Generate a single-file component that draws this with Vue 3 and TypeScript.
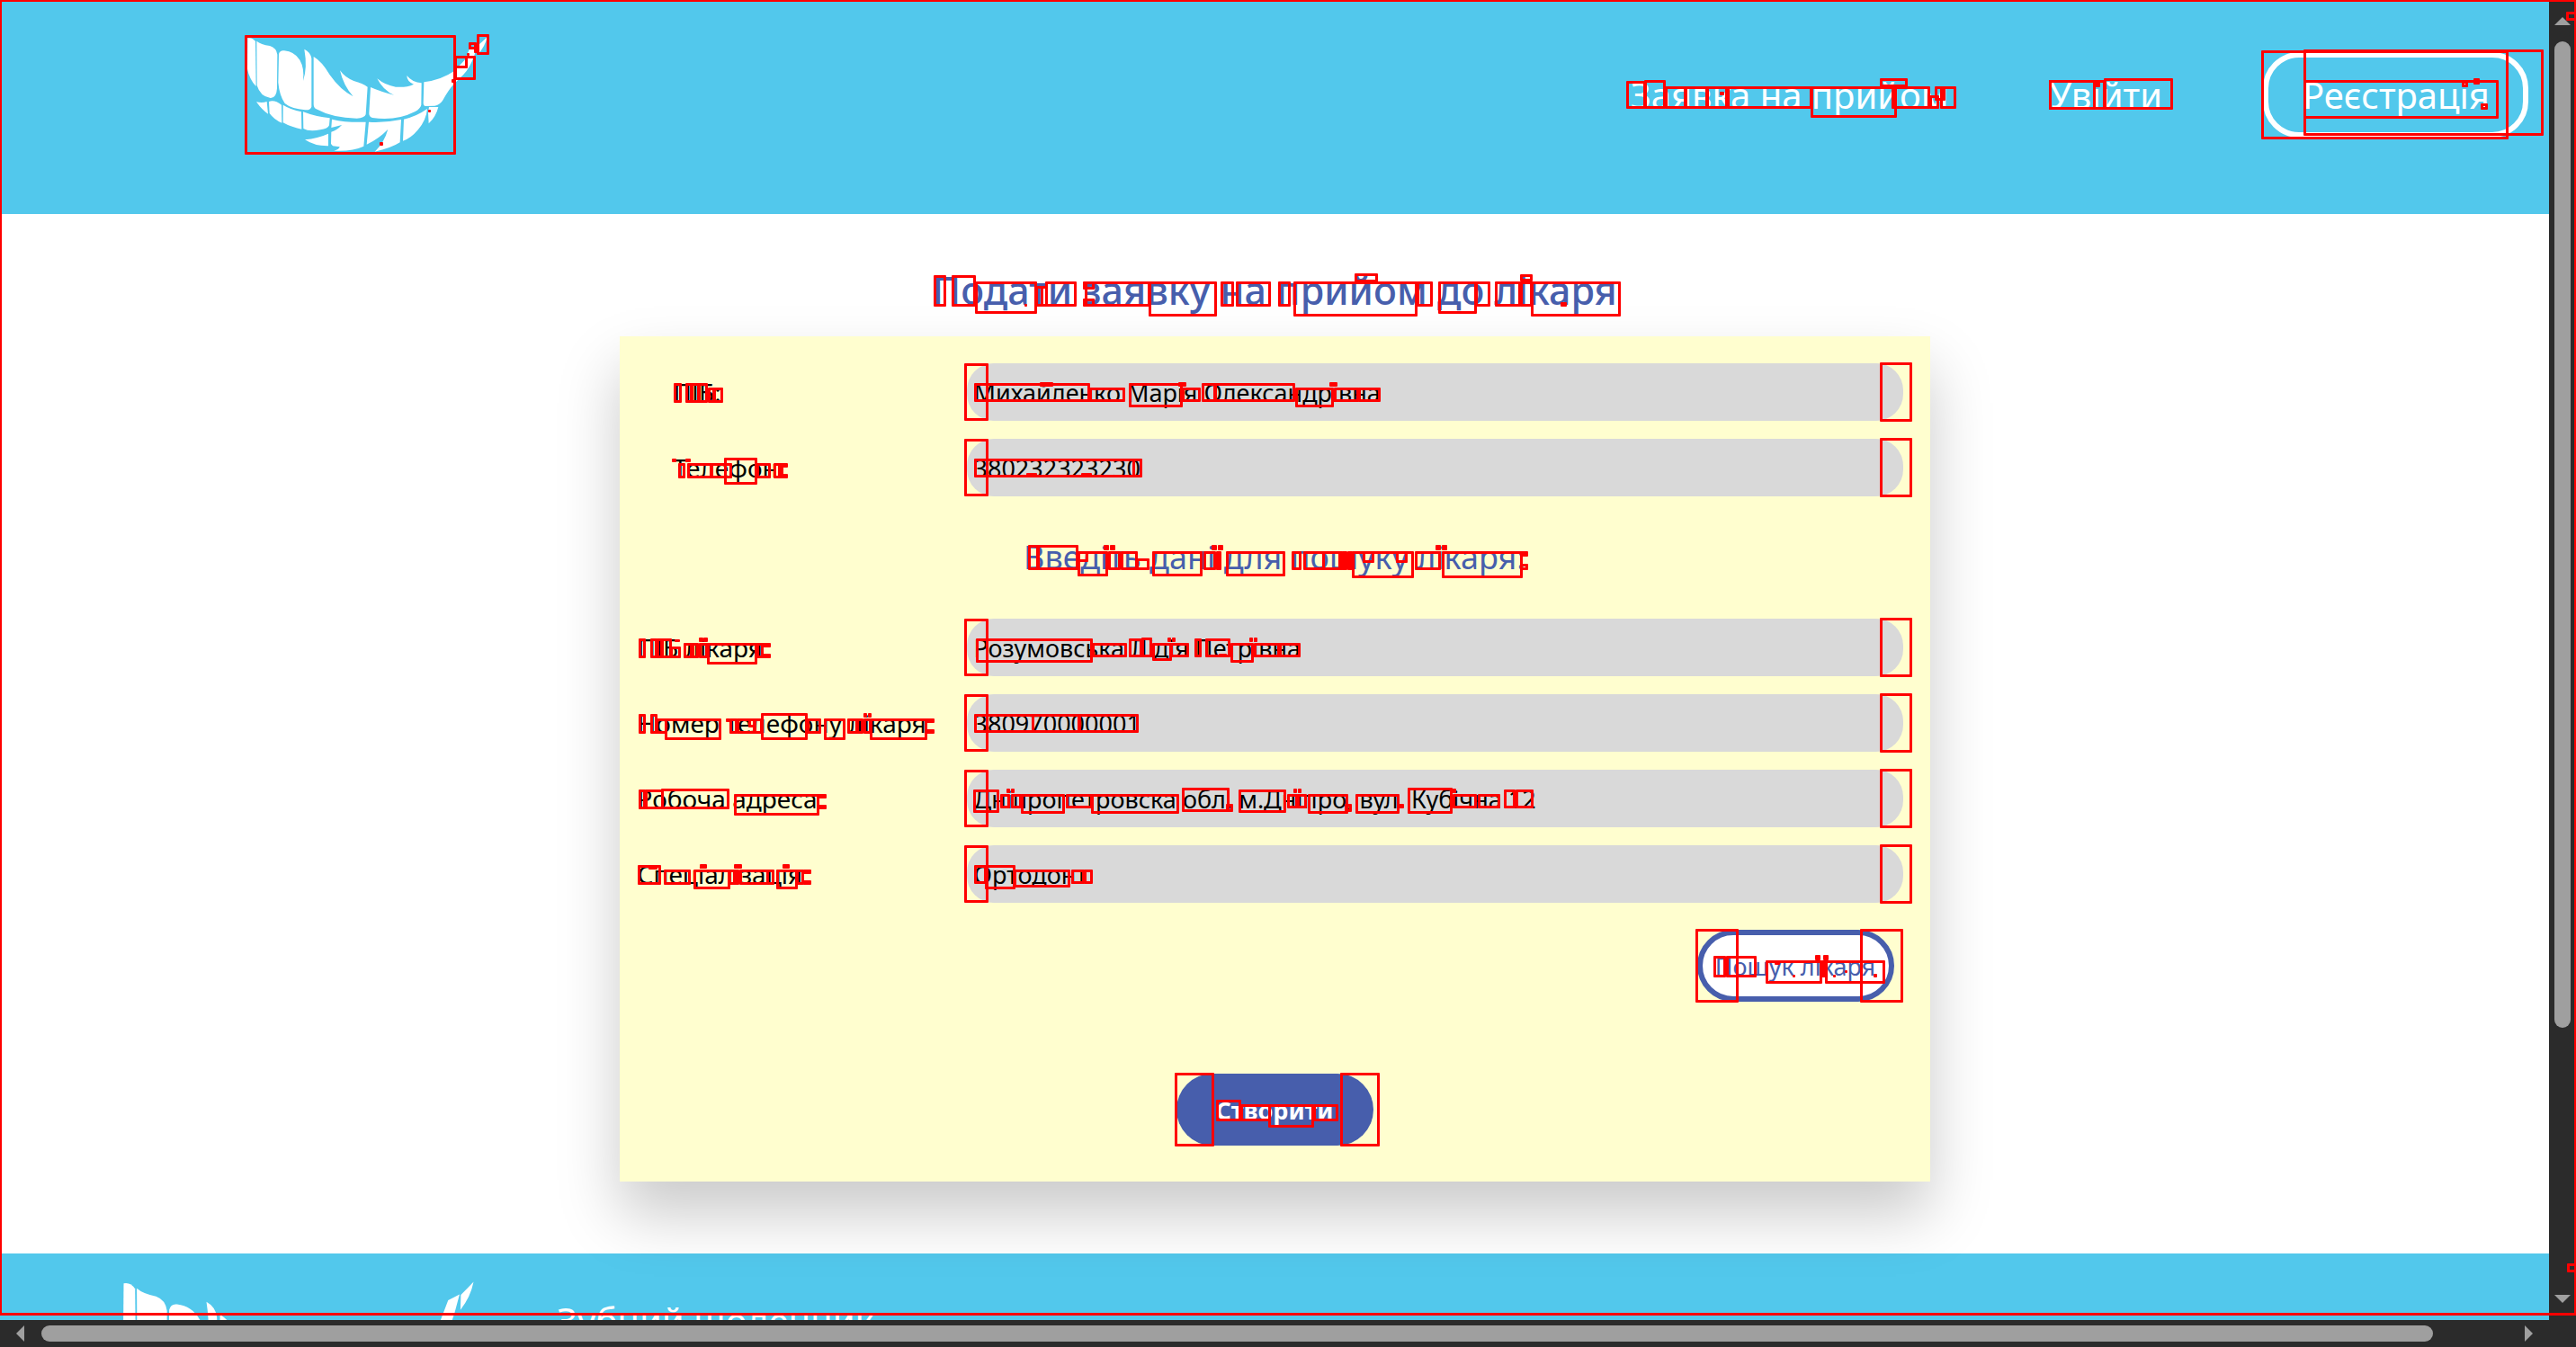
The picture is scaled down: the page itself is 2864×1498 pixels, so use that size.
<script setup lang="ts">
import { reactive } from 'vue'

interface Field {
  id: string
  label: string
  value: string
}

const patient = reactive<Field[]>([
  { id: 'patient-name', label: 'ПІБ:', value: 'Михайленко Марія Олександрівна' },
  { id: 'patient-phone', label: 'Телефон:', value: '380232323230' },
])

const doctor = reactive<Field[]>([
  { id: 'doctor-name', label: 'ПІБ лікаря:', value: 'Розумовська Лідія Петрівна' },
  { id: 'doctor-phone', label: 'Номер телефону лікаря:', value: '380970000001' },
  { id: 'doctor-address', label: 'Робоча адреса:', value: 'Дніпропетровска обл, м.Дніпро, вул. Кубічна 12' },
  { id: 'doctor-field', label: 'Спеціалізація:', value: 'Ортодонт' },
])

const teeth: string[] = [
  'M76 67Q92 64 102 78L104 228Q82 205 75 170Z',
  'M106 77Q120 88 150 93Q172 100 175 122L174 235Q172 268 152 267Q118 262 107 225Z',
  'M180 120Q184 107 198 109Q232 112 250 140Q266 168 261 210Q276 165 265 104Q286 114 289 135L289 296Q286 308 268 307Q222 303 200 285Q182 258 178 215Z',
  'M296 129Q324 145 350 190Q385 240 428 262Q395 225 384 175Q400 198 430 210Q460 218 476 230L470 322Q466 334 440 335Q360 334 305 304Q296 300 296 288Z',
  'M486 231Q520 246 564 257Q528 242 508 202Q535 225 570 230Q605 233 630 221Q607 212 607 192Q625 215 656 217L655 290Q652 302 635 312Q570 345 492 333Q481 330 481 318Z',
  'M664 214Q725 205 766 176L800 140L817 101L843 89L832 125Q818 165 795 190L766 218Q745 240 726 276Q716 290 700 293L668 294Q662 293 662 285Z',
  'M875 64Q868 95 845 120L846 90Q860 78 875 64Z',
  'M105 280Q125 285 140 279L144 320Q125 308 105 280Z',
  'M147 279Q166 272 189 290L190 350Q165 340 149 318Z',
  'M194 290Q220 306 255 313L256 371Q220 364 194 349Z',
  'M261 313Q305 330 350 334L348 358Q344 370 318 373Q280 380 262 369Z',
  'M267 406Q310 402 345 386L345 427Q300 428 267 406Z',
  'M357 338Q410 350 470 347L463 428Q425 446 364 443Q382 438 383 430L360 427L354 420L355 380Q375 374 390 357L355 366Z',
  'M480 347Q535 350 588 339L584 415Q555 434 500 446Q532 415 544 371Q515 402 473 422Z',
  'M597 338Q640 328 675 303Q672 340 645 372Q620 402 594 410Z',
  'M681 297L712 297Q704 330 680 352L678 315Z',
]

// Outlined regions: left, top, right, bottom
type Region = [number, number, number, number]

const regions: Region[] = [
  [-1, -1, 2865, 1463], [2853, 13, 2865, 23], [2854, 1405, 2865, 1415],
  // logo
  [272, 39, 507, 172], [530, 38, 544, 61], [521, 47, 530, 55], [527, 51, 533, 59],
  [519, 59, 522, 62], [505, 62, 529, 89], [505, 62, 520, 76], [502, 88, 506, 92],
  [476, 122, 479, 125], [422, 158, 426, 162],
  // navigation
  [1808, 90, 1830, 121], [1828, 89, 1852, 121], [1851, 96, 1875, 121], [1873, 96, 1899, 121],
  [1897, 96, 1921, 121], [1912, 102, 1917, 106], [1920, 96, 2015, 121], [2013, 96, 2109, 131],
  [2090, 87, 2121, 97], [2103, 96, 2146, 121], [2145, 106, 2156, 121], [2151, 96, 2163, 112],
  [2157, 96, 2175, 121], [2278, 89, 2330, 122], [2278, 89, 2341, 122], [2339, 87, 2416, 122],
  [2329, 91, 2335, 97], [2514, 56, 2789, 155], [2561, 55, 2828, 151], [2561, 89, 2778, 132],
  [2737, 90, 2744, 97], [2750, 87, 2757, 94], [2758, 115, 2766, 122],
  // page title
  [1038, 306, 1052, 341], [1058, 306, 1085, 341], [1084, 313, 1153, 349], [1151, 318, 1160, 341],
  [1157, 318, 1165, 341], [1162, 313, 1197, 341], [1204, 313, 1217, 322], [1204, 332, 1217, 341],
  [1206, 313, 1279, 341], [1277, 313, 1353, 352], [1357, 313, 1372, 341], [1374, 313, 1413, 341],
  [1421, 313, 1435, 341], [1438, 313, 1576, 352], [1506, 304, 1532, 314], [1575, 313, 1593, 341],
  [1599, 313, 1642, 349], [1640, 313, 1657, 341], [1662, 313, 1691, 341], [1690, 305, 1704, 313],
  [1690, 313, 1704, 341], [1702, 313, 1802, 352], [1139, 338, 1142, 341], [1735, 336, 1742, 341],
  // field ends
  [1072, 404, 1099, 468], [1072, 488, 1099, 552], [1072, 688, 1099, 752],
  [1072, 772, 1099, 836], [1072, 856, 1099, 920], [1072, 940, 1099, 1004],
  [2090, 403, 2126, 469], [2090, 487, 2126, 553], [2090, 687, 2126, 753],
  [2090, 771, 2126, 837], [2090, 855, 2126, 921], [2090, 939, 2126, 1005],
  // patient name
  [749, 426, 758, 448], [762, 426, 770, 448], [768, 426, 778, 448], [776, 426, 787, 448],
  [787, 431, 795, 448], [793, 431, 804, 448], [1083, 426, 1212, 447], [1156, 425, 1171, 430],
  [1211, 431, 1251, 447], [1255, 426, 1315, 453], [1310, 425, 1319, 430], [1314, 431, 1335, 447],
  [1336, 426, 1352, 447], [1350, 426, 1440, 447], [1440, 431, 1483, 453], [1478, 425, 1487, 430],
  [1483, 431, 1511, 447], [1510, 431, 1535, 447],
  // patient phone
  [747, 510, 752, 514], [762, 510, 768, 514], [754, 515, 762, 532], [764, 515, 792, 532],
  [790, 515, 814, 532], [805, 509, 842, 539], [841, 515, 857, 532], [860, 515, 868, 532],
  [866, 515, 876, 520], [866, 527, 876, 532], [866, 515, 871, 532], [1083, 510, 1262, 531],
  [1259, 510, 1270, 531], [1141, 526, 1153, 531], [1202, 526, 1214, 531],
  // search heading
  [1143, 606, 1155, 634], [1153, 606, 1199, 634], [1198, 613, 1210, 625], [1198, 613, 1232, 641],
  [1227, 606, 1233, 612], [1234, 606, 1240, 612], [1232, 613, 1246, 634], [1246, 613, 1265, 634],
  [1263, 621, 1278, 634], [1281, 613, 1337, 641], [1347, 606, 1353, 612], [1354, 606, 1360, 612],
  [1338, 613, 1352, 634], [1352, 613, 1358, 634], [1363, 613, 1429, 641], [1436, 613, 1447, 634],
  [1449, 613, 1473, 634], [1470, 613, 1491, 634], [1488, 613, 1493, 634], [1492, 613, 1498, 634],
  [1498, 613, 1504, 634], [1503, 613, 1572, 643], [1515, 613, 1528, 626], [1552, 613, 1565, 626],
  [1573, 613, 1602, 634], [1596, 606, 1602, 612], [1603, 606, 1609, 612], [1603, 613, 1693, 643],
  [1690, 613, 1699, 619], [1690, 627, 1699, 634],
  // doctor name
  [710, 710, 718, 732], [723, 710, 731, 732], [730, 710, 737, 732], [735, 710, 747, 732],
  [745, 719, 757, 732], [750, 711, 756, 714], [760, 715, 770, 732], [769, 715, 777, 732],
  [777, 715, 787, 732], [777, 709, 782, 714], [782, 709, 787, 714], [786, 715, 842, 739],
  [841, 715, 849, 732], [847, 715, 857, 720], [847, 727, 857, 732],
  [1085, 710, 1215, 737], [1214, 715, 1253, 731], [1255, 710, 1270, 731], [1269, 709, 1281, 731],
  [1281, 715, 1303, 735], [1298, 709, 1302, 714], [1303, 709, 1307, 714], [1301, 715, 1322, 731],
  [1328, 710, 1336, 731], [1340, 710, 1368, 731], [1355, 727, 1364, 731], [1368, 715, 1394, 737],
  [1389, 709, 1393, 714], [1394, 709, 1398, 714], [1394, 715, 1423, 731], [1422, 715, 1446, 731],
  // doctor phone
  [710, 794, 718, 816], [723, 794, 731, 816], [729, 799, 742, 816], [739, 799, 802, 823],
  [807, 799, 812, 803], [811, 799, 820, 816], [819, 799, 840, 816], [832, 799, 840, 809],
  [838, 799, 848, 816], [846, 793, 898, 823], [897, 799, 913, 816], [916, 799, 940, 823],
  [942, 799, 954, 816], [952, 799, 960, 816], [960, 799, 969, 816], [960, 793, 964, 798],
  [965, 793, 969, 798], [967, 799, 1031, 823], [1028, 799, 1039, 804], [1028, 811, 1039, 816],
  [1083, 794, 1150, 815], [1147, 794, 1201, 815], [1199, 794, 1266, 815],
  // doctor address
  [710, 878, 718, 900], [717, 878, 738, 900], [735, 877, 811, 900], [816, 883, 911, 907],
  [909, 883, 919, 888], [909, 895, 919, 900],
  [1082, 878, 1111, 904], [1112, 883, 1123, 899], [1119, 877, 1123, 882], [1124, 877, 1128, 882],
  [1124, 883, 1136, 899], [1135, 883, 1184, 905], [1185, 883, 1215, 899], [1213, 883, 1311, 905],
  [1314, 876, 1367, 903], [1363, 894, 1371, 903], [1377, 878, 1430, 904], [1431, 883, 1443, 899],
  [1442, 883, 1453, 899], [1438, 877, 1442, 882], [1443, 877, 1447, 882], [1454, 883, 1499, 905],
  [1495, 894, 1503, 903], [1507, 883, 1556, 905], [1554, 894, 1561, 899], [1565, 876, 1615, 905],
  [1612, 877, 1619, 882], [1615, 883, 1642, 899], [1643, 883, 1668, 899], [1672, 878, 1685, 899],
  [1685, 878, 1705, 899],
  // doctor field
  [709, 962, 735, 984], [721, 962, 731, 967], [738, 967, 768, 984], [771, 967, 812, 989],
  [778, 961, 786, 966], [816, 961, 825, 966], [870, 961, 878, 966], [810, 967, 818, 984],
  [816, 967, 822, 984], [822, 967, 855, 984], [852, 967, 861, 984], [863, 967, 887, 989],
  [885, 967, 894, 984], [893, 967, 902, 972], [893, 979, 902, 984],
  [1083, 962, 1097, 983], [1095, 962, 1129, 989], [1127, 967, 1190, 987], [1191, 967, 1206, 983],
  [1205, 967, 1215, 983],
  // search button
  [1885, 1033, 1933, 1115], [2068, 1033, 2116, 1115], [1905, 1063, 1919, 1087], [1919, 1063, 1953, 1087],
  [1963, 1068, 2026, 1094], [2018, 1062, 2024, 1068], [2027, 1062, 2033, 1068], [2025, 1068, 2031, 1087],
  [2029, 1068, 2096, 1094], [1973, 1069, 1979, 1073], [1993, 1084, 1996, 1087], [2083, 1083, 2087, 1087],
  [2038, 1084, 2041, 1087], [2051, 1079, 2054, 1082],
  // create button
  [1306, 1193, 1350, 1275], [1490, 1193, 1534, 1275], [1352, 1223, 1380, 1247], [1379, 1228, 1413, 1247],
  [1410, 1228, 1461, 1254], [1460, 1228, 1488, 1247],
]

const place = ([left, top, right, bottom]: Region) => ({
  left: `${left}px`,
  top: `${top}px`,
  width: `${right - left}px`,
  height: `${bottom - top}px`,
})
</script>

<template>
  <div class="window">
    <div class="page">
      <header class="header">
        <a href="#" class="logo" aria-label="Зубний щоденник">
          <svg viewBox="75 63 801 387" preserveAspectRatio="none" aria-hidden="true">
            <path v-for="d in teeth" :key="d" :d="d" />
          </svg>
        </a>
        <nav class="nav">
          <a href="#">Заявка на прийом</a>
          <a href="#">Увійти</a>
          <button type="button" class="register">Реєстрація</button>
        </nav>
      </header>

      <main class="main">
        <h1 class="title">Подати заявку на прийом до лікаря</h1>
        <form class="card" @submit.prevent>
          <div v-for="f in patient" :key="f.id" class="row">
            <label :for="f.id" class="indent">{{ f.label }}</label>
            <input :id="f.id" v-model="f.value" type="text">
          </div>
          <h2 class="subtitle">Введіть дані для пошуку лікаря:</h2>
          <div v-for="f in doctor" :key="f.id" class="row">
            <label :for="f.id">{{ f.label }}</label>
            <input :id="f.id" v-model="f.value" type="text">
          </div>
          <button type="button" class="search">Пошук лікаря</button>
          <button type="submit" class="create">Створити</button>
        </form>
      </main>

      <footer class="footer">
        <svg class="footer-logo" viewBox="75 63 801 387" preserveAspectRatio="none" aria-hidden="true">
          <path v-for="d in teeth" :key="d" :d="d" />
        </svg>
        <p class="brand">Зубний щоденник</p>
      </footer>
    </div>

    <div class="bar vertical">
      <i class="arrow up"></i>
      <i class="thumb"></i>
      <i class="arrow down"></i>
    </div>
    <div class="bar horizontal">
      <i class="arrow left"></i>
      <i class="thumb"></i>
      <i class="arrow right"></i>
    </div>
    <div class="corner"></div>

    <div class="regions" aria-hidden="true">
      <i v-for="(r, i) in regions" :key="i" class="region" :style="place(r)"></i>
    </div>
  </div>
</template>

<style>
body {
  margin: 0;
  overflow: hidden;
}
</style>

<style scoped>
.window {
  position: relative;
  display: grid;
  grid-template-columns: minmax(0, 1fr) 30px;
  grid-template-rows: minmax(0, 1fr) 30px;
  height: 100vh;
  overflow: hidden;
  font-family: "Noto Sans", "Open Sans", sans-serif;
  background: #fff;
}

.window *,
.window {
  box-sizing: border-box;
}

.page {
  overflow: hidden;
}

button,
input {
  font-family: inherit;
}

.header {
  display: flex;
  justify-content: space-between;
  align-items: flex-start;
  height: 238px;
  padding: 41px 23px 0 275px;
  background: #52c8ec;
}

.logo svg {
  display: block;
  width: 267px;
  height: 129px;
  fill: #fff;
}

.nav {
  display: flex;
  align-items: center;
  padding-top: 17px;
  font-size: 40px;
}

.nav a {
  margin-right: 112px;
  color: #fff;
  text-decoration: none;
}

.register {
  width: 295px;
  height: 95px;
  padding: 0 0 0 38px;
  border: 6px solid #fff;
  border-radius: 40px;
  background: transparent;
  color: #fff;
  font-size: 40px;
  text-align: left;
}

.main {
  position: relative;
  z-index: 1;
  padding: 50px 0 80px;
}

.title {
  margin: 0 0 16px;
  color: #475eac;
  font-size: 43px;
  font-weight: 500;
  line-height: 70px;
  text-align: center;
}

.card {
  display: flex;
  flex-direction: column;
  gap: 20px;
  width: 100%;
  max-width: 1457px;
  margin: 0 auto;
  padding: 30px 0 40px;
  background: #fffecf;
  box-shadow: 0 36px 64px rgba(0, 0, 0, 0.21);
}

.row {
  display: flex;
  align-items: center;
  padding: 0 30px 0 20px;
}

.row label {
  flex: 0 0 366px;
  color: #000;
  font-size: 28px;
}

.row .indent {
  padding-left: 40px;
}

.row input {
  flex: 1;
  min-width: 0;
  height: 64px;
  padding: 0 8px;
  border: 0;
  border-radius: 30px;
  background: #d9d9d9;
  color: #000;
  font-size: 27px;
}

.subtitle {
  margin: 0;
  color: #475eac;
  font-size: 36px;
  font-weight: 400;
  line-height: 96px;
  text-align: center;
}

.search,
.create {
  width: 219px;
  height: 80px;
  padding: 0;
  border-radius: 40px;
  font-size: 27px;
}

.search {
  align-self: flex-end;
  margin: 10px 40px 0 0;
  border: 6px solid #475eac;
  background: #fff;
  color: #475eac;
}

.create {
  align-self: center;
  margin-top: 60px;
  border: 0;
  background: #475eac;
  color: #fff;
  font-weight: 700;
}

.footer {
  display: flex;
  align-items: flex-start;
  gap: 92px;
  padding: 31px 137px;
  background: #52c8ec;
}

.footer-logo {
  width: 390px;
  height: 215px;
  fill: #fff;
}

.brand {
  margin: 16px 0 0;
  color: #fff;
  font-size: 40px;
  line-height: 56px;
}

.bar {
  display: flex;
  align-items: center;
  background: #2b2b2b;
}

.vertical {
  flex-direction: column;
  padding: 19px 0;
}

.horizontal {
  padding: 0 18px;
}

.thumb {
  border-radius: 9px;
  background: #9f9f9f;
}

.vertical .thumb {
  width: 18px;
  height: 1097px;
  margin: 18px 0 auto;
}

.horizontal .thumb {
  width: 2659px;
  height: 18px;
  margin: 0 auto 0 19px;
}

.arrow {
  background: #9f9f9f;
}

.up,
.down {
  width: 18px;
  height: 9px;
}

.left,
.right {
  width: 9px;
  height: 18px;
}

.up {
  clip-path: polygon(50% 0, 100% 100%, 0 100%);
}

.down {
  clip-path: polygon(0 0, 100% 0, 50% 100%);
}

.left {
  clip-path: polygon(100% 0, 100% 100%, 0 50%);
}

.right {
  clip-path: polygon(0 0, 100% 50%, 0 100%);
}

.corner {
  background: #2b2b2b;
}

.regions {
  position: absolute;
  inset: 0;
  z-index: 2;
  overflow: hidden;
  pointer-events: none;
}

.region {
  position: absolute;
  border-radius: 1px;
  box-shadow: inset 0 0 0 3px #f00;
}
</style>
